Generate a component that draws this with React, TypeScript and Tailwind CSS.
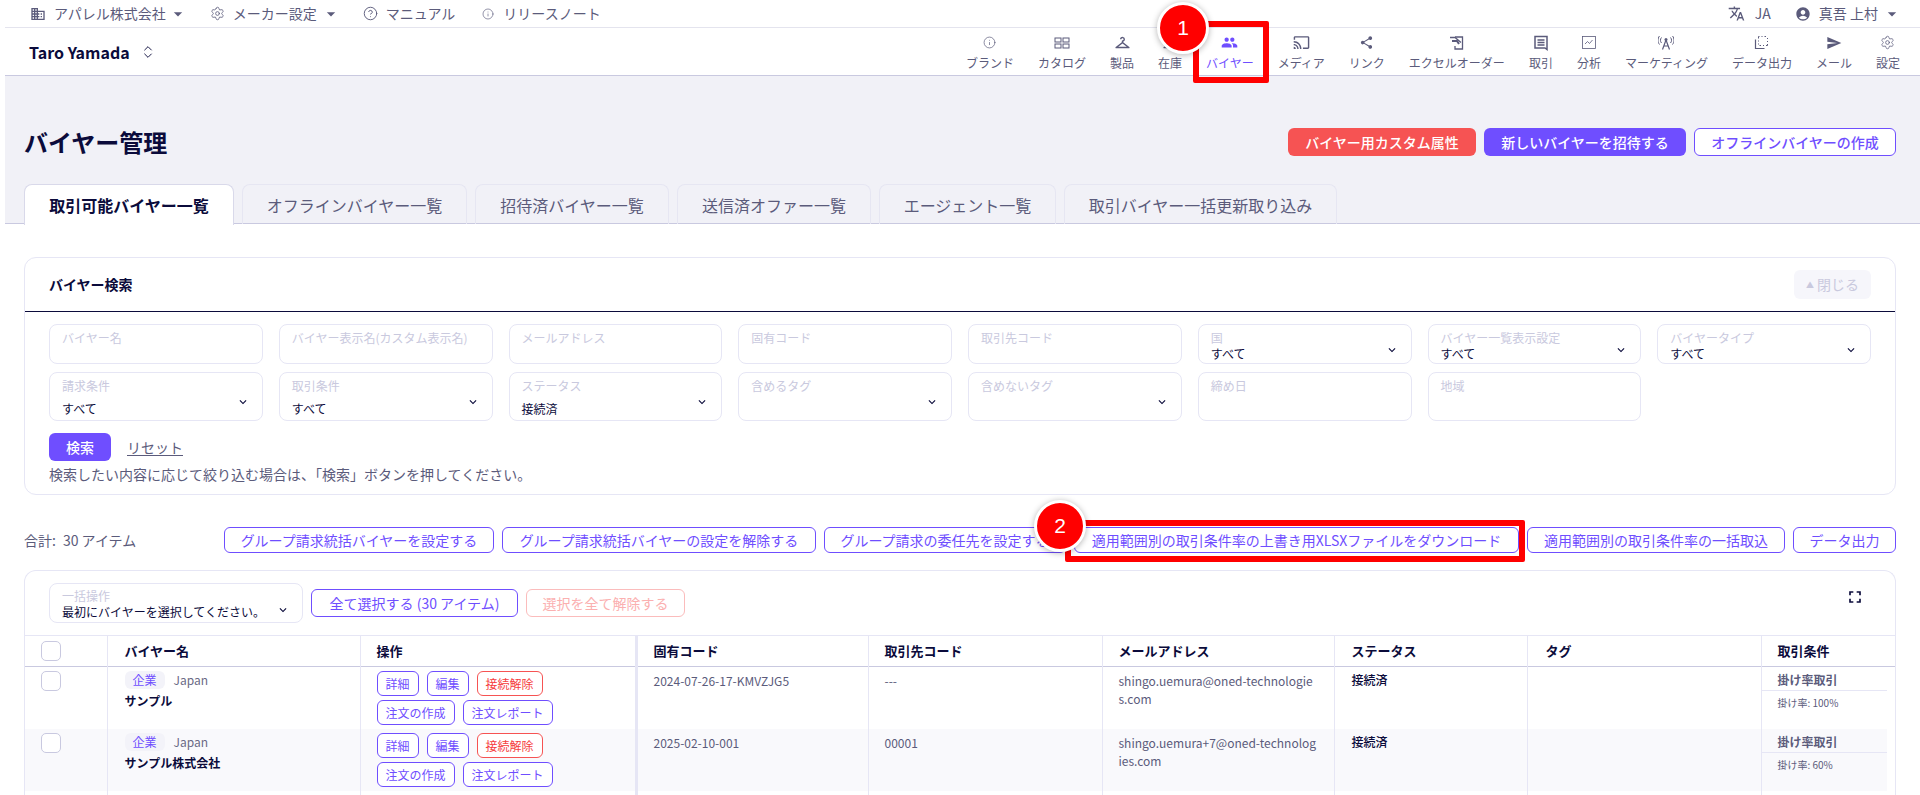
import type { ReactNode } from "react";
import {
  MdAccountCircle,
  MdArrowDropDown,
  MdFullscreen,
  MdKeyboardArrowDown,
  MdOutlineCast,
  MdOutlineCheckroom,
  MdOutlineDomain,
  MdPeople,
  MdSend,
  MdShare,
  MdTranslate,
} from "react-icons/md";
import { ChevronsUpDown, CircleHelp, Info, Settings } from "lucide-react";

function CatalogIcon() {
  return (
    <svg width="16" height="12" viewBox="0 0 16 12" fill="none" stroke="currentColor" strokeWidth="1">
      <rect x="1" y="1" width="6" height="4" />
      <rect x="9" y="1" width="6" height="4" />
      <rect x="1" y="7" width="6" height="4" />
      <rect x="9" y="7" width="6" height="4" />
    </svg>
  );
}

function ExcelIcon() {
  return (
    <svg width="16" height="15" viewBox="0 0 16 15" fill="none" stroke="currentColor" strokeWidth="1.3">
      <path d="M6 2h7.5v12H6v-3" />
      <path d="M1 2.5h5l6 5" />
      <path d="M3 6h5l2 3" strokeWidth="2" />
    </svg>
  );
}

function DealIcon() {
  return (
    <svg width="16" height="16" viewBox="0 0 16 16" fill="none" stroke="currentColor" strokeWidth="1.5">
      <path d="M2 1.5h12v13l-2-1.5H2z" />
      <path d="M4.5 5h7M4.5 7.5h7M4.5 10h7" />
    </svg>
  );
}

function ChartIcon() {
  return (
    <svg width="14" height="13" viewBox="0 0 14 13" fill="none" stroke="currentColor" strokeWidth="0.8">
      <rect x="0.5" y="0.5" width="13" height="12" />
      <path d="M3 8l2.5-2.5L7.5 7.5l3-3.5" />
    </svg>
  );
}

function AntennaIcon() {
  return (
    <svg width="16" height="15" viewBox="0 0 16 15" fill="none" stroke="currentColor" strokeWidth="1">
      <path d="M3.5 2.5c-1.4 1.6-1.4 4 0 5.5M12.5 2.5c1.4 1.6 1.4 4 0 5.5M1.5 1c-2 2.400-2 6 0 8.500M14.500 1c2 2.400 2 6 0 8.500" />
      <circle cx="8" cy="4.500" r="1.500" fill="currentColor" stroke="none" />
      <path d="M8 5l-3.500 9.500M8 5l3.500 9.500M5.500 11h5" strokeWidth="1.200" />
    </svg>
  );
}

function ExportIcon() {
  return (
    <svg width="15" height="15" viewBox="0 0 15 15" fill="none" stroke="currentColor" strokeWidth="1">
      <path d="M4.500 1.500h1M7.500 1.500h1M10.500 1.500h1.500M13.500 3v1M13.500 6v1M13.500 9v1.500h-1.500M10 10.500H9M7 10.500H5.500M4.500 9.500v-1M4.500 6.500v-1M4.500 3.500v-2" />
      <path d="M1.500 4.500v9h9" strokeWidth="1.200" />
    </svg>
  );
}

const navItems: { label: string; icon: ReactNode; active?: boolean }[] = [
  { label: "ブランド", icon: <Info size={13} strokeWidth={1.3} /> },
  { label: "カタログ", icon: <CatalogIcon /> },
  { label: "製品", icon: <MdOutlineCheckroom size={17} /> },
  { label: "在庫", icon: <MdOutlineCheckroom size={17} /> },
  { label: "バイヤー", icon: <MdPeople size={17} />, active: true },
  { label: "メディア", icon: <MdOutlineCast size={17} /> },
  { label: "リンク", icon: <MdShare size={15} /> },
  { label: "エクセルオーダー", icon: <ExcelIcon /> },
  { label: "取引", icon: <DealIcon /> },
  { label: "分析", icon: <ChartIcon /> },
  { label: "マーケティング", icon: <AntennaIcon /> },
  { label: "データ出力", icon: <ExportIcon /> },
  { label: "メール", icon: <MdSend size={16} /> },
  { label: "設定", icon: <Settings size={15} strokeWidth={1.2} /> },
];

const tabs: { label: string; w: string }[] = [
  { label: "オフラインバイヤー一覧", w: "w-[225px]" },
  { label: "招待済バイヤー一覧", w: "w-[194px]" },
  { label: "送信済オファー一覧", w: "w-[194px]" },
  { label: "エージェント一覧", w: "w-[177px]" },
  { label: "取引バイヤー一括更新取り込み", w: "w-[273px]" },
];

const actions: { label: string; w: string }[] = [
  { label: "グループ請求統括バイヤーを設定する", w: "w-[270px]" },
  { label: "グループ請求統括バイヤーの設定を解除する", w: "w-[314px]" },
  { label: "グループ請求の委任先を設定する", w: "w-[242px]" },
  { label: "適用範囲別の取引条件率の上書き用XLSXファイルをダウンロード", w: "w-[445px]" },
  { label: "適用範囲別の取引条件率の一括取込", w: "w-[258px]" },
  { label: "データ出力", w: "w-[103px]" },
];

const fieldsTop: { label: string; value?: string; select?: boolean }[] = [
  { label: "バイヤー名" },
  { label: "バイヤー表示名(カスタム表示名)" },
  { label: "メールアドレス" },
  { label: "固有コード" },
  { label: "取引先コード" },
  { label: "国", value: "すべて", select: true },
  { label: "バイヤー一覧表示設定", value: "すべて", select: true },
  { label: "バイヤータイプ", value: "すべて", select: true },
];

const fieldsBottom: { label: string; value?: string; select?: boolean }[] = [
  { label: "請求条件", value: "すべて", select: true },
  { label: "取引条件", value: "すべて", select: true },
  { label: "ステータス", value: "接続済", select: true },
  { label: "含めるタグ", select: true },
  { label: "含めないタグ", select: true },
  { label: "締め日" },
  { label: "地域" },
];

const rows = [
  { name: "サンプル", code: "2024-07-26-17-KMVZJG5", partner: "---", email: "shingo.uemura@oned-technologies.com", rate: "掛け率: 100%" },
  { name: "サンプル株式会社", code: "2025-02-10-001", partner: "00001", email: "shingo.uemura+7@oned-technologies.com", rate: "掛け率: 60%" },
];

function Field({ label, value, select, tall }: { label: string; value?: string; select?: boolean; tall?: boolean }) {
  return (
    <div className={`relative rounded-lg border border-[#e6e6f5] bg-white px-[12px] pt-[5px] ${tall ? "h-[49px]" : "h-[40px]"}`}>
      <div className="text-[12px] leading-[16px] text-[#c9c9de]">{label}</div>
      {value && <div className={`text-[12px] leading-[16px] text-[#0b0b3b] ${tall ? "mt-[7px]" : ""}`}>{value}</div>}
      {select && (
        <MdKeyboardArrowDown size={14} className={`absolute right-[12px] text-[#0b0b3b] ${tall ? "bottom-[11px]" : "bottom-[6px]"}`} />
      )}
    </div>
  );
}

function RowButton({ children, danger, w }: { children: ReactNode; danger?: boolean; w: string }) {
  return (
    <button
      className={`flex h-[25px] items-center justify-center rounded-md border bg-white text-[12px] ${w} ${
        danger ? "border-[#f65353] text-[#f63c3c]" : "border-[#6f4eff] text-[#6f4eff]"
      }`}
    >
      {children}
    </button>
  );
}

function Check() {
  return <div className="h-[20px] w-[20px] rounded-[5px] border border-[#c9c9e0] bg-white" />;
}

export default function App() {
  return (
    <div className="relative h-[795px] w-[1920px] overflow-hidden bg-white pl-[5px] font-['Noto_Sans_CJK_JP','Noto_Sans',sans-serif] text-[#0b0b3b]">
      {/* top utility bar */}
      <div className="flex h-[28px] items-center justify-between border-b border-[#e4e4ee] pl-[25px] pr-[18px] text-[14px] text-[#5b5b7b]">
        <div className="flex items-center">
          <MdOutlineDomain size={16} />
          <span className="ml-[8px]">アパレル株式会社</span>
          <MdArrowDropDown size={20} className="ml-[2px]" />
          <Settings size={15} strokeWidth={1.3} className="ml-[22px]" />
          <span className="ml-[8px]">メーカー設定</span>
          <MdArrowDropDown size={20} className="ml-[4px]" />
          <CircleHelp size={15} strokeWidth={1.5} className="ml-[22px]" />
          <span className="ml-[8px]">マニュアル</span>
          <Info size={12} strokeWidth={1.3} className="ml-[27px]" />
          <span className="ml-[9px]">リリースノート</span>
        </div>
        <div className="flex items-center">
          <MdTranslate size={17} />
          <span className="ml-[10px]">JA</span>
          <MdAccountCircle size={16} className="ml-[24px]" />
          <span className="ml-[8px]">真吾 上村</span>
          <MdArrowDropDown size={20} className="ml-[4px]" />
        </div>
      </div>

      {/* main nav */}
      <div className="flex h-[48px] items-center justify-between border-b border-[#c9c9e0] pl-[24px] pr-[20px]">
        <div className="flex items-center text-[16px] font-semibold">
          Taro Yamada
          <ChevronsUpDown size={16} strokeWidth={1.4} className="ml-[10px]" />
        </div>
        <div className="flex items-center gap-[24px]">
          {navItems.map((item) => (
            <div key={item.label} className={`flex flex-col items-center ${item.active ? "text-[#6f4eff]" : "text-[#5b5b7b]"}`}>
              <div className="flex h-[20px] items-center justify-center">{item.icon}</div>
              <div className="mt-[2px] text-[12px] leading-[16px] whitespace-nowrap">{item.label}</div>
            </div>
          ))}
        </div>
      </div>

      {/* page head */}
      <div className="h-[148px] border-b border-[#c9c9e0] bg-[#f1f1f7] pl-[19px] pr-[24px] pt-[52px]">
        <div className="flex h-[28px] items-center justify-between">
          <h1 className="text-[24px] font-bold">バイヤー管理</h1>
          <div className="flex gap-[8px] text-[14px] font-medium">
            <button className="h-[28px] w-[188px] rounded-md bg-[#f65353] text-white">バイヤー用カスタム属性</button>
            <button className="h-[28px] w-[202px] rounded-md bg-[#6f4eff] text-white">新しいバイヤーを招待する</button>
            <button className="h-[28px] w-[202px] rounded-md border border-[#6f4eff] bg-white text-[#6f4eff]">オフラインバイヤーの作成</button>
          </div>
        </div>
        <div className="mt-[28px] flex h-[40px] gap-[8px] text-[16px]">
          <div className="relative flex h-[41px] w-[210px] items-center justify-center rounded-t-lg border border-b-0 border-[#d9d9ea] bg-white font-bold">
            取引可能バイヤー一覧
          </div>
          {tabs.map((t) => (
            <div key={t.label} className={`flex items-center justify-center rounded-t-lg border border-b-0 border-[#e6e6f2] whitespace-nowrap text-[#5b5b7b] ${t.w}`}>
              {t.label}
            </div>
          ))}
        </div>
      </div>

      <div className="pl-[19px] pr-[24px] pt-[33px]">
        {/* search card */}
        <div className="h-[238px] rounded-xl border border-[#e6e6f5]">
          <div className="flex h-[54px] items-center justify-between border-b border-[#0b0b3b] pl-[24px] pr-[24px]">
            <div className="text-[14px] font-bold">バイヤー検索</div>
            <div className="flex h-[29px] w-[77px] items-center justify-center gap-[3px] rounded-md bg-[#f6f6fb] text-[14px] text-[#c9c9de]">
              <span className="text-[8px]">▲</span>
              閉じる
            </div>
          </div>
          <div className="px-[24px] pt-[12px]">
            <div className="grid grid-cols-8 gap-x-[16px]">
              {fieldsTop.map((f) => (
                <Field key={f.label} {...f} />
              ))}
            </div>
            <div className="mt-[8px] grid grid-cols-8 gap-x-[16px]">
              {fieldsBottom.map((f) => (
                <Field key={f.label} {...f} tall />
              ))}
            </div>
            <div className="mt-[12px] flex items-center">
              <button className="h-[28px] w-[62px] rounded-md bg-[#6f4eff] text-[14px] font-medium text-white">検索</button>
              <span className="ml-[16px] text-[14px] text-[#5b5b7b] underline underline-offset-2">リセット</span>
            </div>
            <div className="mt-[3px] text-[14px] leading-[20px] text-[#5b5b7b]">検索したい内容に応じて絞り込む場合は、「検索」ボタンを押してください。</div>
          </div>
        </div>

        {/* total and actions */}
        <div className="mt-[32px] flex items-center">
          <div className="w-[200px] text-[14px] text-[#5b5b7b]">
            合計:<span className="ml-[7px]">30 アイテム</span>
          </div>
          <div className="flex gap-[8px]">
            {actions.map((a) => (
              <button key={a.label} className={`flex h-[26px] shrink-0 items-center justify-center rounded-md border border-[#6f4eff] bg-white text-[14px] whitespace-nowrap text-[#6f4eff] ${a.w}`}>
                {a.label}
              </button>
            ))}
          </div>
        </div>

        {/* table card */}
        <div className="mt-[17px] rounded-t-xl border-x border-t border-[#e6e6f5]">
          <div className="flex h-[64px] items-start justify-between pl-[24px] pr-[30px] pt-[12px]">
            <div className="flex items-center gap-[8px]">
              <div className="relative h-[40px] w-[254px] rounded-lg border border-[#e6e6f5] px-[12px] pt-[4px]">
                <div className="text-[12px] leading-[16px] text-[#c9c9de]">一括操作</div>
                <div className="text-[12px] leading-[16px]">最初にバイヤーを選択してください。</div>
                <MdKeyboardArrowDown size={14} className="absolute right-[12px] bottom-[5px]" />
              </div>
              <button className="h-[28px] w-[207px] rounded-md border border-[#6f4eff] text-[14px] text-[#6f4eff]">全て選択する (30 アイテム)</button>
              <button className="h-[28px] w-[159px] rounded-md border border-[#fbbcbc] text-[14px] text-[#fbb0b0]">選択を全て解除する</button>
            </div>
            <MdFullscreen size={20} className="mt-[4px]" />
          </div>
          <table className="w-full table-fixed border-collapse text-left">
            <colgroup>
              <col className="w-[82px]" />
              <col className="w-[253px]" />
              <col className="w-[276px]" />
              <col className="w-[232px]" />
              <col className="w-[234px]" />
              <col className="w-[232px]" />
              <col className="w-[193px]" />
              <col className="w-[234px]" />
              <col />
            </colgroup>
            <thead>
              <tr className="h-[31px] border-y border-t-[#e6e6f5] border-b-[#c9c9e0] text-[13px] font-bold">
                <th className="border-r border-[#e6e6f5] pl-[16px]"><Check /></th>
                <th className="border-r border-[#e6e6f5] pl-[17px]">バイヤー名</th>
                <th className="border-r-[3px] border-[#e6e6f5] pl-[16px]">操作</th>
                <th className="border-r border-[#e6e6f5] pl-[16px]">固有コード</th>
                <th className="border-r border-[#e6e6f5] pl-[16px]">取引先コード</th>
                <th className="border-r border-[#e6e6f5] pl-[16px]">メールアドレス</th>
                <th className="border-r border-[#e6e6f5] pl-[17px]">ステータス</th>
                <th className="border-r border-[#e6e6f5] pl-[18px]">タグ</th>
                <th className="pl-[16px]">取引条件</th>
              </tr>
            </thead>
            <tbody className="align-top text-[12px] text-[#5b5b7b]">
              {rows.map((r, i) => (
                <tr key={r.code} className="h-[62px]">
                  <td className={`border-r border-[#e6e6f5] pl-[16px] pt-[4px] ${i % 2 ? "bg-[#f9f9fc]" : ""}`}><Check /></td>
                  <td className={`border-r border-[#e6e6f5] pl-[17px] pt-[4px] ${i % 2 ? "bg-[#f9f9fc]" : ""}`}>
                    <div className="flex items-center">
                      <span className="flex h-[18px] w-[40px] items-center justify-center rounded-md bg-[#f3f3f9] text-[#6f4eff]">企業</span>
                      <span className="ml-[9px] text-[#6a6a85]">Japan</span>
                    </div>
                    <div className="mt-[3px] text-[12px] leading-[18px] font-bold text-[#0b0b3b]">{r.name}</div>
                  </td>
                  <td className={`border-r-[3px] border-[#e6e6f5] pl-[16px] pt-[4px] ${i % 2 ? "bg-[#f9f9fc]" : ""}`}>
                    <div className="flex gap-[8px]">
                      <RowButton w="w-[42px]">詳細</RowButton>
                      <RowButton w="w-[42px]">編集</RowButton>
                      <RowButton w="w-[66px]" danger>接続解除</RowButton>
                    </div>
                    <div className="mt-[4px] flex gap-[8px]">
                      <RowButton w="w-[78px]">注文の作成</RowButton>
                      <RowButton w="w-[90px]">注文レポート</RowButton>
                    </div>
                  </td>
                  <td className={`border-r border-[#e6e6f5] pl-[16px] pt-[5px] leading-[18px] ${i % 2 ? "bg-[#f9f9fc]" : ""}`}>{r.code}</td>
                  <td className={`border-r border-[#e6e6f5] pl-[16px] pt-[5px] leading-[18px] ${i % 2 ? "bg-[#f9f9fc]" : ""}`}>{r.partner}</td>
                  <td className={`border-r border-[#e6e6f5] px-[16px] pt-[5px] leading-[18px] break-all ${i % 2 ? "bg-[#f9f9fc]" : ""}`}>{r.email}</td>
                  <td className={`border-r border-[#e6e6f5] pl-[17px] pt-[4px] leading-[18px] font-medium text-[#0b0b3b] ${i % 2 ? "bg-[#f9f9fc]" : ""}`}>接続済</td>
                  <td className={`border-r border-[#e6e6f5] ${i % 2 ? "bg-[#f9f9fc]" : ""}`} />
                  <td>
                    <div className={`h-[62px] w-[125px] pt-[4px] ${i % 2 ? "bg-[#f9f9fc]" : ""}`}>
                      <div className="border-b border-[#e6e6f5] pb-[1px] pl-[16px] leading-[18px] font-bold">掛け率取引</div>
                      <div className="mt-[5px] pl-[16px] text-[10px] leading-[14px]">{r.rate}</div>
                    </div>
                  </td>
                </tr>
              ))}
              <tr className="h-[62px]">
                <td className="border-r border-[#e6e6f5]" />
                <td className="border-r border-[#e6e6f5]" />
                <td className="border-r-[3px] border-[#e6e6f5]" />
                <td className="border-r border-[#e6e6f5]" />
                <td className="border-r border-[#e6e6f5]" />
                <td className="border-r border-[#e6e6f5]" />
                <td className="border-r border-[#e6e6f5]" />
                <td className="border-r border-[#e6e6f5]" />
                <td />
              </tr>
            </tbody>
          </table>
        </div>
      </div>

      {/* screenshot annotations */}
      <div className="absolute left-[1193px] top-[21px] h-[62px] w-[76px] rounded-[2px] border-[6px] border-[#ff0000]" />
      <div className="absolute left-[1065px] top-[520px] h-[42px] w-[460px] rounded-[2px] border-[6px] border-[#ff0000]" />
      <div className="absolute left-[1157px] top-[2px] flex h-[52px] w-[52px] items-center justify-center rounded-full border-[3px] border-white bg-[#ff0000] font-['Liberation_Sans',sans-serif] text-[21px] text-white shadow-[0_1px_6px_rgba(0,0,0,0.3)]">1</div>
      <div className="absolute left-[1034px] top-[500px] flex h-[52px] w-[52px] items-center justify-center rounded-full border-[3px] border-white bg-[#ff0000] font-['Liberation_Sans',sans-serif] text-[21px] text-white shadow-[0_1px_6px_rgba(0,0,0,0.3)]">2</div>
    </div>
  );
}
